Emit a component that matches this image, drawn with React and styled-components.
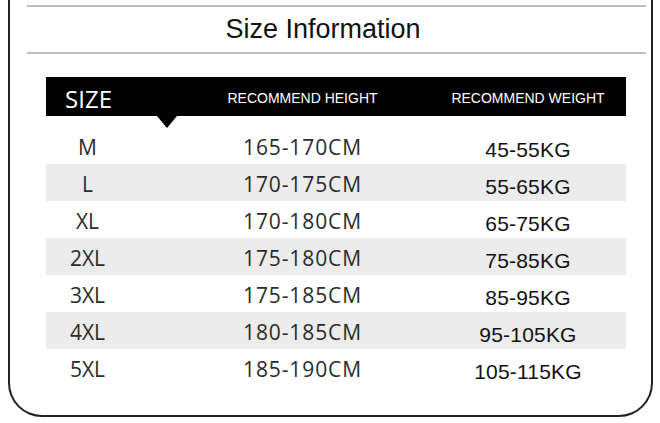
import React from 'react'
import styled, { createGlobalStyle } from 'styled-components'

const GlobalStyle = createGlobalStyle`
  html, body {
    margin: 0;
    padding: 0;
    background: #ffffff;
  }
`

const sizes = [
  { size: 'M', height: '165-170CM', weight: '45-55KG' },
  { size: 'L', height: '170-175CM', weight: '55-65KG' },
  { size: 'XL', height: '170-180CM', weight: '65-75KG' },
  { size: '2XL', height: '175-180CM', weight: '75-85KG' },
  { size: '3XL', height: '175-185CM', weight: '85-95KG' },
  { size: '4XL', height: '180-185CM', weight: '95-105KG' },
  { size: '5XL', height: '185-190CM', weight: '105-115KG' }
]

const Card = styled.div`
  box-sizing: border-box;
  margin-left: 8px;
  width: 645px;
  height: 417px;
  border: 2px solid #222;
  border-top: none;
  border-radius: 0 0 34px 34px;
  padding-top: 5px;
`

const Rule = styled.div`
  height: 2px;
  background: #bdbdbd;
  margin: 0 5px 0 17px;
`

const Title = styled.div`
  height: 45px;
  display: flex;
  align-items: center;
  justify-content: center;
  padding-right: 15px;
  font-family: "Liberation Sans", Arial, sans-serif;
  font-size: 27px;
  color: #111;
`

const Table = styled.div`
  margin: 23px 0 0 36px;
  width: 580px;
`

const HeadBar = styled.div`
  position: relative;
  height: 39px;
  background: #000;
  display: grid;
  grid-template-columns: 83px 347px 104px 1fr;
  align-items: center;
  justify-items: center;
`

const Pointer = styled.div`
  position: absolute;
  left: 111px;
  top: 100%;
  width: 0;
  height: 0;
  border-left: 10px solid transparent;
  border-right: 10px solid transparent;
  border-top: 12px solid #000;
`

const SizeHead = styled.span`
  font-family: "Open Sans", sans-serif;
  font-size: 24px;
  color: #fff;
  padding-top: 3px;
  padding-left: 2px;
`

const ColHead = styled.span`
  font-family: "Liberation Sans", Arial, sans-serif;
  font-size: 14px;
  color: #fff;
  white-space: nowrap;
  padding-top: 2px;
`

const Body = styled.div`
  margin-top: 11px;
`

const Row = styled.div`
  height: 37px;
  display: grid;
  grid-template-columns: 83px 347px 104px 1fr;
  align-items: center;
  justify-items: center;
  background: ${p => (p.$striped ? '#ececec' : 'transparent')};
`

const SizeCell = styled.span`
  font-family: "Open Sans", sans-serif;
  font-size: 21px;
  color: #2b2b2b;
  padding-top: 2px;
`

const HeightCell = styled.span`
  font-family: "Open Sans", sans-serif;
  font-size: 21px;
  letter-spacing: 0.9px;
  color: #2b2b2b;
  padding-top: 2px;
  white-space: nowrap;
`

const WeightCell = styled.span`
  font-family: "Liberation Sans", Arial, sans-serif;
  font-size: 21px;
  letter-spacing: 0.2px;
  color: #111;
  padding-top: 9px;
  white-space: nowrap;
`

const App = () => (
  <>
    <GlobalStyle />
    <Card>
      <Rule />
      <Title>Size Information</Title>
      <Rule />
      <Table>
        <HeadBar>
          <SizeHead>SIZE</SizeHead>
          <ColHead>RECOMMEND HEIGHT</ColHead>
          <ColHead>RECOMMEND WEIGHT</ColHead>
          <Pointer />
        </HeadBar>
        <Body>
          {sizes.map((s, i) => (
            <Row key={s.size} $striped={i % 2 === 1}>
              <SizeCell>{s.size}</SizeCell>
              <HeightCell>{s.height}</HeightCell>
              <WeightCell>{s.weight}</WeightCell>
            </Row>
          ))}
        </Body>
      </Table>
    </Card>
  </>
)

export default App
